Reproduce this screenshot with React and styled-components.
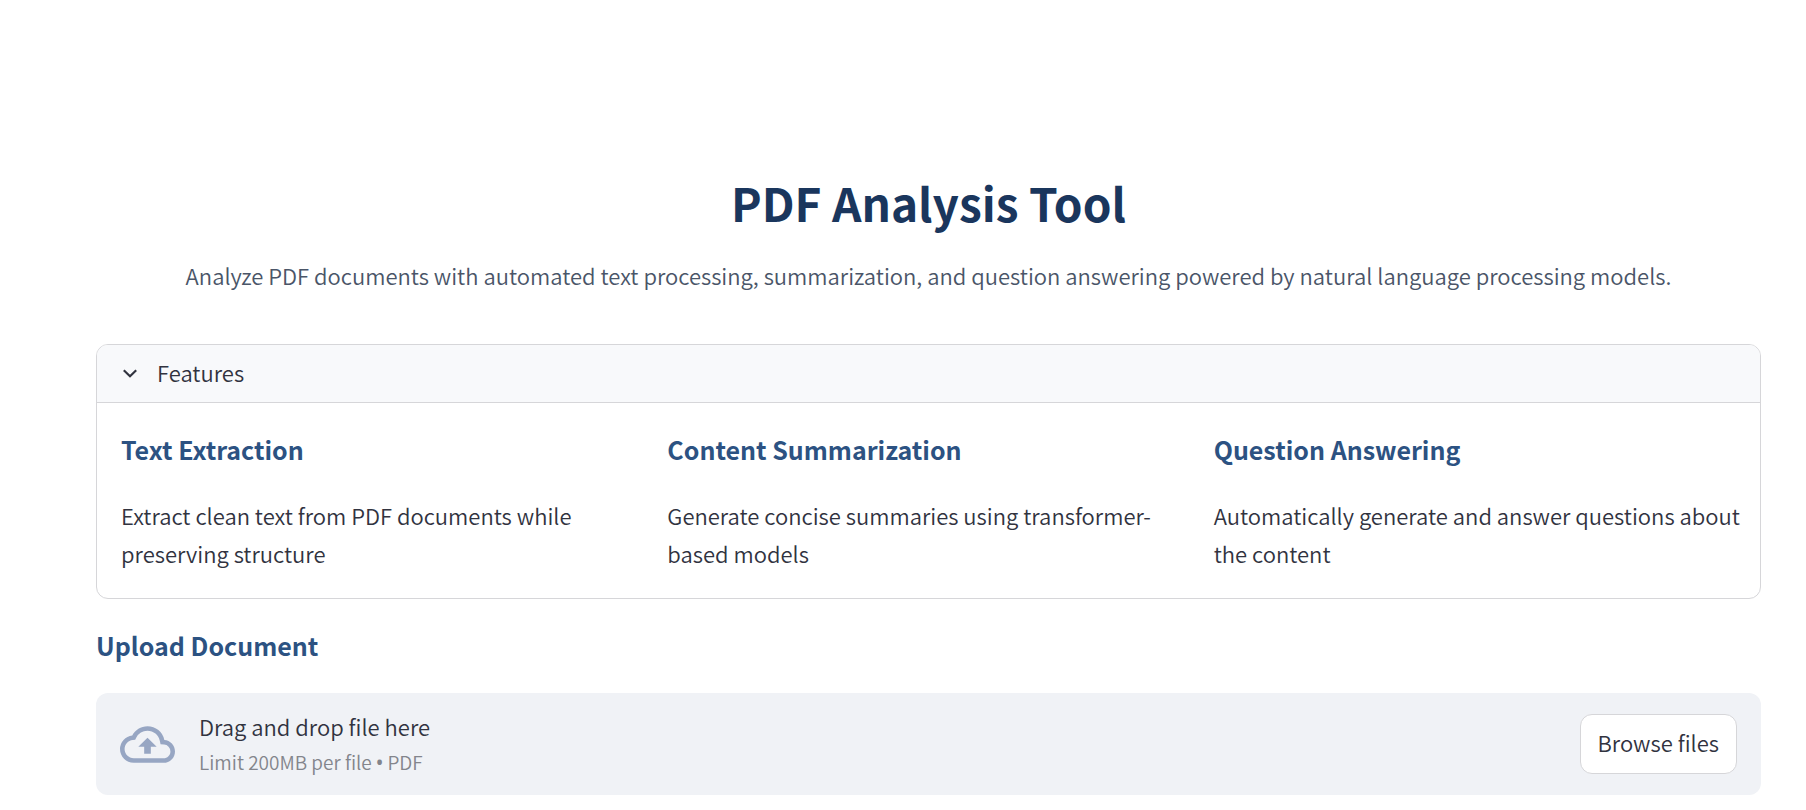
import React, { useState } from "react";
import styled, { createGlobalStyle } from "styled-components";

const GlobalStyle = createGlobalStyle`
  *, *::before, *::after { box-sizing: border-box; }
  body {
    margin: 0;
    background: #ffffff;
    color: #31333f;
    font-family: "Noto Sans CJK SC", sans-serif;
    font-size: 22px;
    font-weight: 350;
    line-height: 38px;
  }
  h1, h2, h3, p { margin: 0; }
`;

const Page = styled.main`
  padding: 170px 45px 14px 96px;
`;

const Title = styled.h1`
  color: #1a365d;
  font-size: 46px;
  font-weight: 700;
  line-height: 64px;
  text-align: center;
`;

const Subtitle = styled.p`
  margin: 22px 0 50px;
  color: #4a5568;
  text-align: center;
`;

const Panel = styled.section`
  border: 1px solid #d6d6d9;
  border-radius: 12px;
  overflow: hidden;
`;

const PanelToggle = styled.button`
  display: flex;
  align-items: center;
  gap: 16px;
  width: 100%;
  height: 58px;
  padding: 0 24px 4px;
  border: 0;
  border-bottom: 1px solid #d6d6d9;
  background: #f8f9fb;
  color: inherit;
  font: inherit;
  cursor: pointer;
`;

const FeatureGrid = styled.div`
  display: grid;
  grid-template-columns: repeat(3, 1fr);
  gap: 16px;
  padding: 22px 16px 26px 24px;
`;

const Heading = styled.h3`
  color: #2c5282;
  font-size: 25px;
  font-weight: 700;
  line-height: 48px;
`;

const FeatureText = styled.p`
  margin-top: 23px;
`;

const SectionTitle = styled(Heading).attrs({ as: "h2" })`
  margin: 22px 0 24px;
`;

const Dropzone = styled.section`
  display: flex;
  align-items: center;
  gap: 24px;
  min-height: 102px;
  padding: 0 24px;
  border-radius: 12px;
  background: #f0f2f6;
`;

const DropText = styled.div`
  flex: 1;
  padding-bottom: 2px;
`;

const DropHint = styled.p`
  color: #83858c;
  font-size: 19px;
  line-height: 34px;
`;

const Bullet = styled.span`
  font-family: "Open Sans", sans-serif;
  font-weight: 600;
`;

const BrowseButton = styled.button`
  height: 60px;
  padding: 0 17px 4px;
  border: 1px solid #d6d6d9;
  border-radius: 12px;
  background: #ffffff;
  color: inherit;
  font: inherit;
  cursor: pointer;
`;

const features = [
  { title: "Text Extraction", text: "Extract clean text from PDF documents while preserving structure" },
  { title: "Content Summarization", text: "Generate concise summaries using transformer-based models" },
  { title: "Question Answering", text: "Automatically generate and answer questions about the content" },
];

export default function App() {
  const [open, setOpen] = useState(true);
  return (
    <>
      <GlobalStyle />
      <Page>
        <Title>PDF Analysis Tool</Title>
        <Subtitle>
          Analyze PDF documents with automated text processing, summarization, and question answering powered by natural language processing models.
        </Subtitle>
        <Panel>
          <PanelToggle type="button" aria-expanded={open} onClick={() => setOpen(!open)}>
            <svg width="20" height="20" viewBox="0 0 20 20" fill="none" stroke="currentColor" strokeWidth="2.2" aria-hidden="true">
              <path d="M2.8 8.2L9 14.2l6.2-6" />
            </svg>
            Features
          </PanelToggle>
          {open && (
            <FeatureGrid>
              {features.map((f) => (
                <article key={f.title}>
                  <Heading>{f.title}</Heading>
                  <FeatureText>{f.text}</FeatureText>
                </article>
              ))}
            </FeatureGrid>
          )}
        </Panel>
        <SectionTitle>Upload Document</SectionTitle>
        <Dropzone>
          <svg width="55" height="55" viewBox="0 0 24 24" fill="#97a6c3" aria-hidden="true">
            <path d="M19.35 10.04A7.49 7.49 0 0012 4C9.11 4 6.6 5.64 5.35 8.04A5.994 5.994 0 000 14c0 3.31 2.69 6 6 6h13c2.76 0 5-2.24 5-5 0-2.64-2.05-4.78-4.65-4.96zM19 18H6c-2.21 0-4-1.79-4-4 0-2.05 1.53-3.76 3.56-3.97l1.07-.11.5-.95A5.469 5.469 0 0112 6c2.62 0 4.88 1.86 5.39 4.43l.3 1.5 1.53.11A2.98 2.98 0 0122 15c0 1.65-1.35 3-3 3zM8 13h2.55v3h2.9v-3H16l-4-4z" />
          </svg>
          <DropText>
            <p>Drag and drop file here</p>
            <DropHint>
              Limit 200MB per file <Bullet>•</Bullet> PDF
            </DropHint>
          </DropText>
          <BrowseButton type="button">Browse files</BrowseButton>
        </Dropzone>
      </Page>
    </>
  );
}
